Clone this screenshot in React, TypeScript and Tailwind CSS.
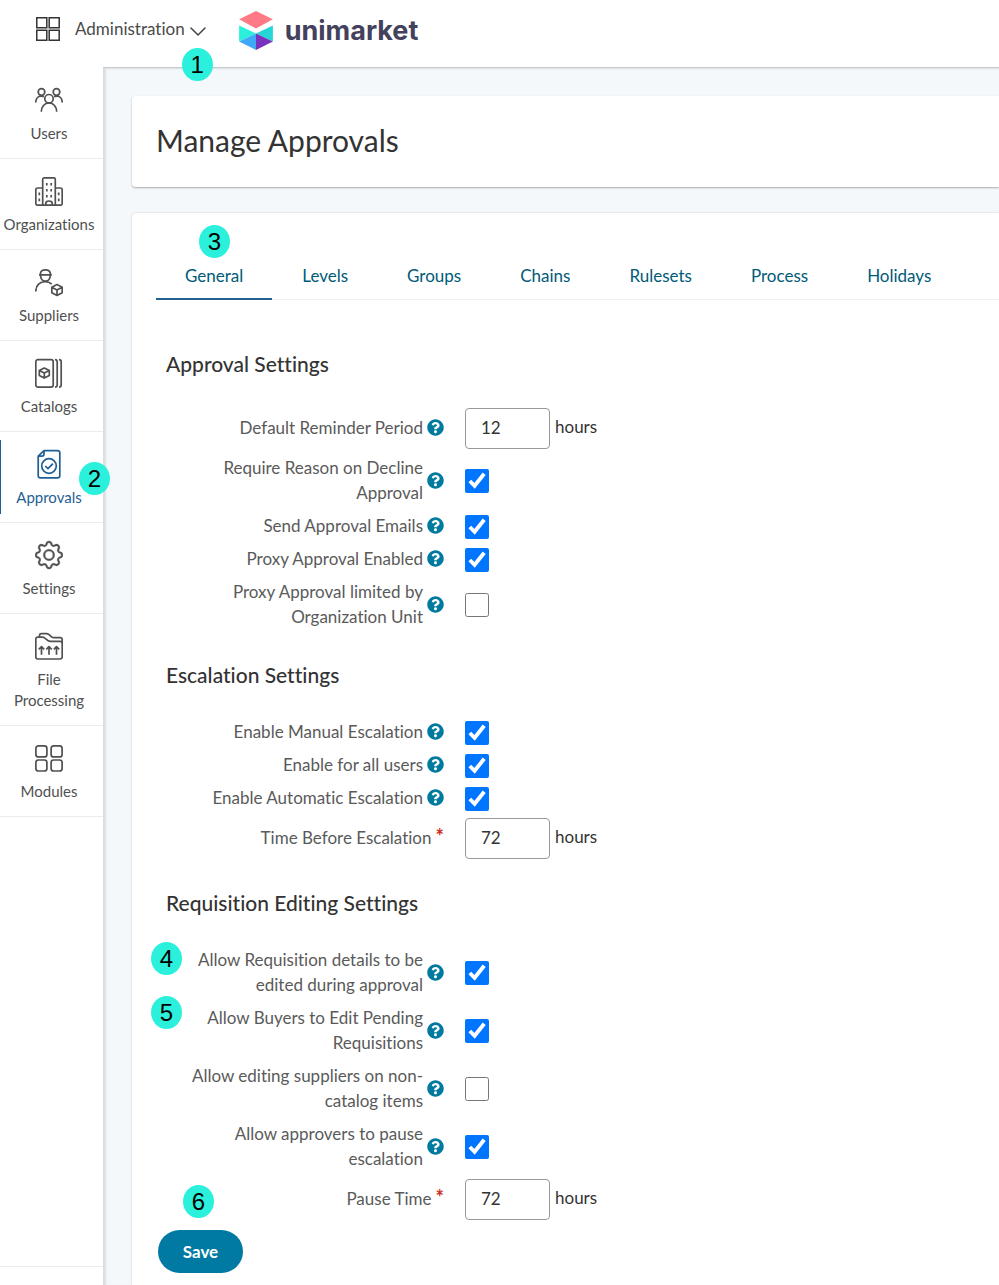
import type { ReactNode } from 'react'
import { BsGear } from 'react-icons/bs'
import { FaQuestionCircle } from 'react-icons/fa'

const icons: Record<string, ReactNode> = {
  users: (
    <>
      <circle cx="6.5" cy="7" r="3.3" />
      <circle cx="21.5" cy="7" r="3.3" />
      <circle cx="14" cy="13.7" r="4.2" />
      <path d="M6.3 26.8c0-5 3.2-8.9 7.7-8.9s7.7 3.9 7.7 8.9M.8 17.4c0-3.4 1.9-6.3 5.4-6.3 1 0 1.9.2 2.7.7M27.2 17.4c0-3.4-1.9-6.3-5.4-6.3-1 0-1.9.2-2.7.7" />
    </>
  ),
  organizations: (
    <>
      <path d="M7.7 29.2V3.4c0-.9.7-1.6 1.6-1.6h9.4c.9 0 1.6.7 1.6 1.6v25.8M7.7 12H2.6c-1 0-1.8.8-1.8 1.8v13.6c0 1 .8 1.8 1.8 1.8h22.8c1 0 1.8-.8 1.8-1.8V13.8c0-1-.8-1.8-1.8-1.8h-5.1M10.8 29v-1.6c0-1.3 1.1-2.4 3.2-2.4s3.2 1.1 3.2 2.4V29" />
      <path d="M11.8 7v2.4M16.2 7v2.4M11.8 13v2.4M16.2 13v2.4M11.8 19v2.4M16.2 19v2.4M4.3 16.5v2.8M4.3 22.5v2.8M23.7 16.5v2.8M23.7 22.5v2.8" />
    </>
  ),
  suppliers: (
    <>
      <path d="M4 7.8h12.8M5.3 7.5C5.3 4.4 7.3 2.8 10.4 2.8s5.1 1.6 5.1 4.7M5.5 8c0 3.6 1.9 6.2 4.9 6.2s4.9-2.6 4.9-6.2M.8 24.5C.8 18.3 4.9 14.6 10.3 14.6c2.7 0 4.7.9 6.4 2.5" />
      <path d="M22 17.6l5.2 2.7v5.5L22 28.5l-5.2-2.7v-5.5zM16.8 20.3l5.2 2.6 5.2-2.6M22 22.9v5.6" />
    </>
  ),
  catalogs: (
    <>
      <rect x=".8" y="1.7" width="17.4" height="27.4" rx="2" />
      <path d="M20 1.7c1.4 0 2.2.8 2.2 2.2v23c0 1.4-.8 2.2-2.2 2.2M24 1.7c1.4 0 2.2.8 2.2 2.2v23c0 1.4-.8 2.2-2.2 2.2" />
      <path d="M9.3 10l5 2.6v4.9l-5 2.6-5-2.6v-4.9zM4.3 12.6l5 2.5 5-2.5M9.3 15.1v5" />
    </>
  ),
  approvals: (
    <>
      <path d="M9 1.7h13.6c1.3 0 2.2.9 2.2 2.2v22.8c0 1.3-.9 2.2-2.2 2.2H5.4c-1.3 0-2.2-.9-2.2-2.2V7.2zM9 1.9v3.2c0 1.2-.8 2.1-2 2.1H3.4" />
      <circle cx="14" cy="17" r="7.3" />
      <path d="M10.3 17l2.7 2.6 4.9-4.9" />
    </>
  ),
  files: (
    <>
      <path d="M.8 26V8.2c0-1.2.8-2 2-2h4.4c1.2 0 2 .4 2.9 1.1l2.8 2.2c.8.6 1.5.9 2.5.9h9.8c1.2 0 2 .8 2 2V26c0 1.2-.8 2-2 2H2.8c-1.2 0-2-.8-2-2z" />
      <path d="M4.5 6.1V4.7c0-1.2.8-2 2-2h5c1 0 1.7.3 2.5.9l2.6 2.2c.7.6 1.4.9 2.4.9h6.2c1.2 0 2 .8 2 2v3.5M6.5 23.8v-8M3.8 18.3l2.7-2.7 2.7 2.7M14 23.8v-8M11.3 18.3l2.7-2.7 2.7 2.7M21.5 23.8v-8M18.8 18.3l2.7-2.7 2.7 2.7" />
    </>
  ),
  modules: (
    <>
      <rect x=".9" y="2.9" width="11" height="11" rx="2.5" />
      <rect x="16.1" y="2.9" width="11" height="11" rx="2.5" />
      <rect x=".9" y="17" width="11" height="11" rx="2.5" />
      <rect x="16.1" y="17" width="11" height="11" rx="2.5" />
    </>
  ),
}

const navItems = [
  { label: 'Users', icon: 'users' },
  { label: 'Organizations', icon: 'organizations' },
  { label: 'Suppliers', icon: 'suppliers' },
  { label: 'Catalogs', icon: 'catalogs' },
  { label: 'Approvals', icon: 'approvals', active: true, step: 2 },
  { label: 'Settings', icon: 'settings' },
  { label: 'File Processing', icon: 'files' },
  { label: 'Modules', icon: 'modules' },
]

const tabs = ['General', 'Levels', 'Groups', 'Chains', 'Rulesets', 'Process', 'Holidays']

type Field = {
  id: string
  label: string
  checked?: boolean
  hours?: string
  required?: boolean
  step?: number
}

const sections: { title: string; fields: Field[] }[] = [
  {
    title: 'Approval Settings',
    fields: [
      { id: 'reminder', label: 'Default Reminder Period', hours: '12' },
      { id: 'decline-reason', label: 'Require Reason on Decline Approval', checked: true },
      { id: 'emails', label: 'Send Approval Emails', checked: true },
      { id: 'proxy', label: 'Proxy Approval Enabled', checked: true },
      { id: 'proxy-unit', label: 'Proxy Approval limited by Organization Unit', checked: false },
    ],
  },
  {
    title: 'Escalation Settings',
    fields: [
      { id: 'manual', label: 'Enable Manual Escalation', checked: true },
      { id: 'all-users', label: 'Enable for all users', checked: true },
      { id: 'automatic', label: 'Enable Automatic Escalation', checked: true },
      { id: 'escalation-time', label: 'Time Before Escalation', hours: '72', required: true },
    ],
  },
  {
    title: 'Requisition Editing Settings',
    fields: [
      { id: 'edit-details', label: 'Allow Requisition details to be edited during approval', checked: true, step: 4 },
      { id: 'edit-pending', label: 'Allow Buyers to Edit Pending Requisitions', checked: true, step: 5 },
      { id: 'edit-suppliers', label: 'Allow editing suppliers on non-catalog items', checked: false },
      { id: 'pause', label: 'Allow approvers to pause escalation', checked: true },
      { id: 'pause-time', label: 'Pause Time', hours: '72', required: true },
    ],
  },
]

function Step({ n, className }: { n: number; className: string }) {
  return (
    <span
      className={`absolute z-20 flex h-[33px] w-[31px] items-center justify-center rounded-[50%] bg-[#2bf1dc] font-['Liberation_Sans',sans-serif] text-2xl leading-none font-normal text-black ${className}`}
    >
      {n}
    </span>
  )
}

function Header() {
  return (
    <header className="flex h-[67px] shrink-0 items-start bg-white pl-9">
      <button type="button" className="relative flex items-center pt-4 text-[17px] leading-[26px] text-[#4a4a4a]">
        <svg viewBox="0 0 24 24" className="mr-[15px] h-6 w-6" fill="none" stroke="#333" strokeWidth="1.5">
          <path d="M.8.8h10v10H.8zM13.2.8h10v10h-10zM.8 13.2h10v10H.8zM13.2 13.2h10v10h-10z" />
        </svg>
        Administration
        <svg viewBox="0 0 16 9" className="mt-1 ml-[5px] h-[9px] w-4" fill="none" stroke="#444" strokeWidth="1.5">
          <path d="M1 1l7 7 7-7" strokeLinecap="round" strokeLinejoin="round" />
        </svg>
        <Step n={1} className="top-12 right-[-7px]" />
      </button>
      <a href="#home" className="ml-[33px] flex items-center gap-3 pt-[11px]">
        <svg viewBox="717 32 102 118" className="h-[39px] w-[34px]">
          <path d="M768 32l51 25-51 28-51-28z" fill="#ff7a85" />
          <path d="M717 76l51 24-51 24z" fill="#2bf1dc" />
          <path d="M819 76l-51 24 51 24z" fill="#24d6d6" />
          <path d="M717 124l51-24v50z" fill="#40a9f7" />
          <path d="M819 124l-51-24v50z" fill="#7a32bd" />
        </svg>
        <span className="font-['Inter',sans-serif] text-[27px] leading-[39px] font-bold text-[#43415c]">unimarket</span>
      </a>
    </header>
  )
}

function Sidebar() {
  return (
    <nav className="relative z-10 flex w-[103px] shrink-0 flex-col bg-white pt-px">
      {navItems.map((item) => (
        <a
          key={item.label}
          href={`#${item.icon}`}
          className={`relative flex flex-col items-center border-b border-[#ebebeb] pt-[17px] pr-[7px] pb-[14px] pl-[2px] text-center text-[15px] leading-[21px] ${
            item.active ? 'text-[#1f5f95]' : 'text-[#505050]'
          }`}
        >
          {item.active && <span className="absolute top-2 bottom-2 left-0 w-px bg-[#1f5f95]" />}
          {item.icon === 'settings' ? (
            <BsGear className="mb-2 h-[30px] w-7" stroke="currentColor" strokeWidth="0.2" />
          ) : (
            <svg
              viewBox="0 0 28 30"
              className="mb-2 h-[30px] w-7"
              fill="none"
              stroke="currentColor"
              strokeWidth="1.7"
              strokeLinejoin="round"
            >
              {icons[item.icon]}
            </svg>
          )}
          {item.label}
          {item.step && <Step n={item.step} className="top-[30px] right-[-7px]" />}
        </a>
      ))}
      <div className="mt-auto h-[19px] border-t border-[#ebebeb]" />
    </nav>
  )
}

function FieldRow({ field }: { field: Field }) {
  return (
    <div className="relative flex items-center">
      {field.step && (
        <Step n={field.step} className={field.step === 5 ? 'top-[-9px] left-[-15px]' : 'top-[-5px] left-[-15px]'} />
      )}
      <div className="mr-[21px] flex w-[278px] shrink-0 items-center justify-end gap-1 pb-[2px]">
        <label htmlFor={field.id} className="text-right text-[#5a5a5a]">
          {field.label}
          {field.required && <span className="ml-1 text-xl leading-none font-bold text-[#cc2a1e]">*</span>}
        </label>
        {!field.required && (
          <button type="button" aria-label={`Help: ${field.label}`} className="shrink-0 text-[#007a9f]">
            <FaQuestionCircle className="h-[17px] w-[17px]" />
          </button>
        )}
      </div>
      {field.hours ? (
        <>
          <input
            id={field.id}
            type="text"
            defaultValue={field.hours}
            className="h-[41px] w-[85px] rounded-[4px] border border-[#999] bg-white px-[15px] pb-[3px] text-[#333]"
          />
          <span className="ml-[5px] pb-1 text-[#333]">hours</span>
        </>
      ) : (
        <input id={field.id} type="checkbox" defaultChecked={field.checked} className="h-6 w-6" />
      )}
    </div>
  )
}

export default function App() {
  return (
    <div className="flex min-h-screen flex-col overflow-x-hidden bg-white font-['Lato',sans-serif] [font-variant-ligatures:none]">
      <Header />
      <div className="flex flex-1">
        <Sidebar />
        <main className="flex min-w-0 flex-1 flex-col gap-[26px] border-t border-[#c6c9cb] bg-[#f4f8fb] pt-7 pl-[29px] shadow-[inset_3px_1px_2px_rgba(0,0,0,0.1)]">
          <div className="rounded-l-[4px] bg-white px-6 pt-[25px] pb-[27px] shadow-[0_1px_2px_rgba(0,0,0,0.3)]">
            <h1 className="text-[30px] leading-[39px] text-[#333]">Manage Approvals</h1>
          </div>

          <div className="flex-1 rounded-tl-[4px] bg-white pt-10 pl-6 shadow-[0_0_2px_rgba(0,0,0,0.2)]">
            <div className="flex gap-px shadow-[inset_0_-1px_0_#f1f1f1]" role="tablist">
              {tabs.map((tab, i) => (
                <button
                  key={tab}
                  type="button"
                  role="tab"
                  aria-selected={i === 0}
                  className={`relative border-b-2 px-[29px] pt-[11px] pb-[10px] text-[17px] leading-6 text-[#005a78] ${
                    i === 0 ? 'border-[#236192]' : 'border-transparent'
                  }`}
                >
                  {tab}
                  {i === 0 && <Step n={3} className="top-[-28px] left-[43px]" />}
                </button>
              ))}
            </div>

            <form className="pt-5 pb-2 text-[17px] leading-[25px]" onSubmit={(e) => e.preventDefault()}>
              {sections.map((section) => (
                <section key={section.title} className="px-[10px] pt-[31px]">
                  <h2 className="mb-[31px] text-[21px] leading-[26px] font-medium text-[#333]">{section.title}</h2>
                  <div className="flex flex-col gap-[6px]">
                    {section.fields.map((field) => (
                      <FieldRow key={field.id} field={field} />
                    ))}
                  </div>
                </section>
              ))}
              <div className="relative mt-[10px] px-0.5">
                <Step n={6} className="top-[-45px] left-[27px]" />
                <button type="submit" className="h-[43px] w-[85px] rounded-full bg-[#007aa3] font-bold text-white">
                  Save
                </button>
              </div>
            </form>
          </div>
        </main>
      </div>
    </div>
  )
}
